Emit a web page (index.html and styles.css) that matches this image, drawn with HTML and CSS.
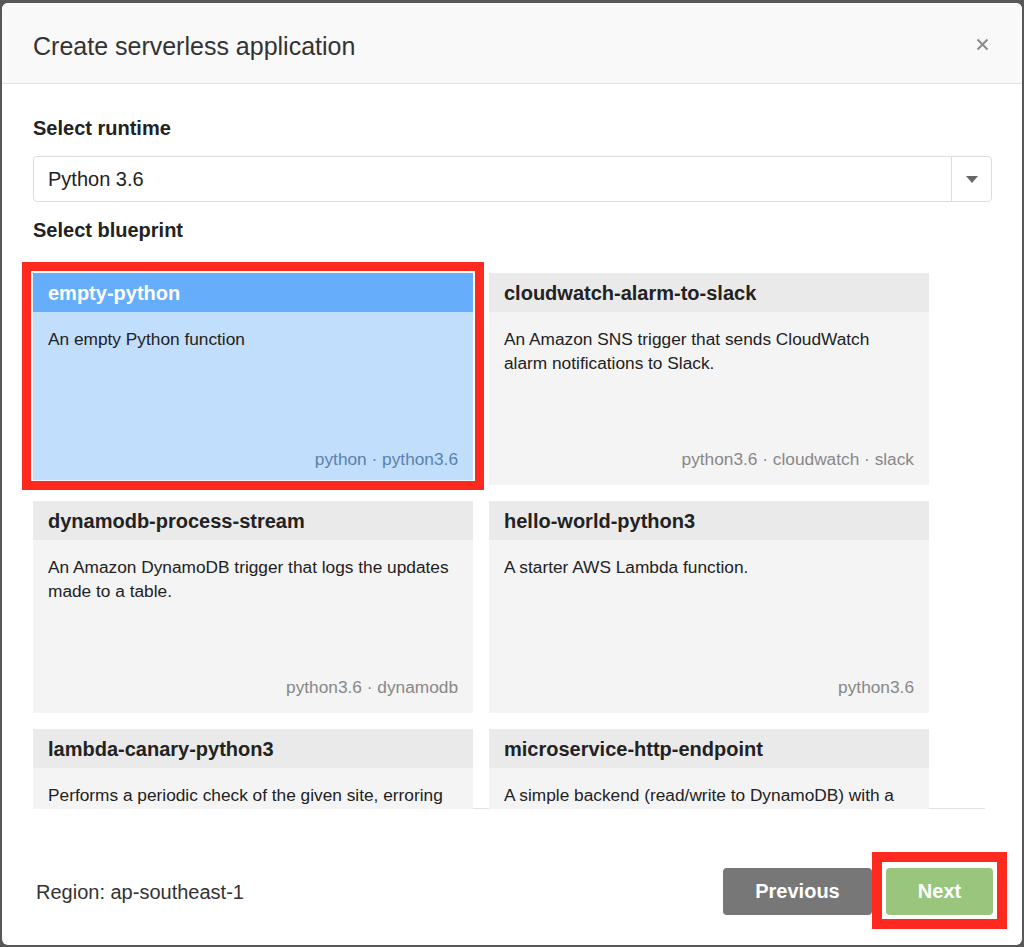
FILE: index.html
```html
<!DOCTYPE html>
<html lang="en">
<head>
<meta charset="utf-8">
<title>Create serverless application</title>
<link rel="stylesheet" href="styles.css">
</head>
<body>
<div class="modal">
  <div class="modal-header">
    <h1 class="modal-title">Create serverless application</h1>
    <button class="close" aria-label="Close">
      <svg width="13" height="13" viewBox="0 0 13 13"><path d="M1.5 1.5 L11.5 11.5 M11.5 1.5 L1.5 11.5" stroke="#8a8a8a" stroke-width="2" fill="none"/></svg>
    </button>
  </div>
  <div class="modal-body">
    <div class="label first">Select runtime</div>
    <div class="select">
      <span class="select-value">Python 3.6</span>
      <span class="select-arrow"><span class="tri"></span></span>
    </div>
    <div class="label">Select blueprint</div>
    <div class="blueprints">
      <div class="grid">
        <div class="card selected">
          <div class="card-title">empty-python</div>
          <div class="card-body">
            <div class="desc">An empty Python function</div>
            <div class="tags">python · python3.6</div>
          </div>
          <div class="annot"></div>
        </div>
        <div class="card">
          <div class="card-title">cloudwatch-alarm-to-slack</div>
          <div class="card-body">
            <div class="desc">An Amazon SNS trigger that sends CloudWatch alarm notifications to Slack.</div>
            <div class="tags">python3.6 · cloudwatch · slack</div>
          </div>
        </div>
        <div class="card">
          <div class="card-title">dynamodb-process-stream</div>
          <div class="card-body">
            <div class="desc">An Amazon DynamoDB trigger that logs the updates made to a table.</div>
            <div class="tags">python3.6 · dynamodb</div>
          </div>
        </div>
        <div class="card">
          <div class="card-title">hello-world-python3</div>
          <div class="card-body">
            <div class="desc">A starter AWS Lambda function.</div>
            <div class="tags">python3.6</div>
          </div>
        </div>
        <div class="card">
          <div class="card-title">lambda-canary-python3</div>
          <div class="card-body">
            <div class="desc">Performs a periodic check of the given site, erroring out on test failure.</div>
            <div class="tags">python3.6 · events</div>
          </div>
        </div>
        <div class="card">
          <div class="card-title">microservice-http-endpoint</div>
          <div class="card-body">
            <div class="desc">A simple backend (read/write to DynamoDB) with a RESTful API endpoint using Amazon API Gateway.</div>
            <div class="tags">python3.6 · api-gateway</div>
          </div>
        </div>
      </div>
    </div>
  </div>
  <div class="modal-footer">
    <div class="region">Region: ap-southeast-1</div>
    <div class="buttons">
      <button class="btn btn-prev">Previous</button>
      <button class="btn btn-next">Next<span class="annot annot-btn"></span></button>
    </div>
  </div>
</div>
</body>
</html>
```
FILE: styles.css
```css
html, body {
  margin: 0;
  padding: 0;
}
body {
  background: #585858;
  font-family: "Liberation Sans", Arial, sans-serif;
  color: #222;
  height: 947px;
  overflow: hidden;
}
.modal {
  margin: 3px 2px 0 2px;
  width: 1020px;
  height: 942px;
  background: #fff;
  border-radius: 6px;
  display: flex;
  flex-direction: column;
  overflow: hidden;
}
.modal-header {
  height: 80px;
  flex: none;
  background: #f9f9f9;
  border-bottom: 1px solid #e3e3e3;
  display: flex;
  align-items: center;
  justify-content: space-between;
  padding: 0 33px 0 31px;
}
.modal-title {
  margin: 5px 0 0 0;
  font-size: 25px;
  font-weight: normal;
  color: #333;
  line-height: 30px;
}
.close {
  border: 0;
  background: none;
  padding: 0;
  width: 13px;
  height: 13px;
  display: flex;
  margin-top: 3px;
}
.modal-body {
  padding: 0 30px 0 31px;
  flex: none;
}
.label {
  font-size: 20px;
  font-weight: bold;
  color: #222;
  line-height: 24px;
  margin-top: 16px;
}
.label.first {
  margin-top: 32px;
}
.select {
  margin-top: 16px;
  height: 44px;
  border: 1px solid #dcdcdc;
  border-radius: 4px;
  display: flex;
  align-items: stretch;
}
.select-value {
  flex: 1;
  padding-left: 14px;
  font-size: 20px;
  line-height: 44px;
  color: #222;
}
.select-arrow {
  width: 39px;
  border-left: 1px solid #dcdcdc;
  display: flex;
  align-items: center;
  justify-content: center;
}
.tri {
  width: 0;
  height: 0;
  border-left: 6px solid transparent;
  border-right: 6px solid transparent;
  border-top: 7px solid #666;
  margin-top: 1px;
}
.blueprints {
  margin-top: 0;
  margin-right: 7px;
  height: 535px;
  padding-top: 31px;
  border-bottom: 1px solid #e2e2e2;
  clip-path: inset(-30px -30px 0 -30px);
}
.grid {
  display: grid;
  grid-template-columns: 440px 440px;
  grid-auto-rows: 212px;
  column-gap: 16px;
  row-gap: 16px;
}
.card {
  position: relative;
  display: flex;
  flex-direction: column;
  background: #f4f4f4;
}
.card-title {
  height: 39px;
  flex: none;
  background: #ebeaea;
  padding: 0 15px;
  font-size: 20px;
  font-weight: bold;
  line-height: 40px;
  color: #222;
}
.card-body {
  flex: 1;
  display: flex;
  flex-direction: column;
  padding: 15px 15px 14px 15px;
}
.desc {
  font-size: 17.3px;
  line-height: 24px;
  color: #222;
}
.tags {
  margin-top: auto;
  text-align: right;
  font-size: 17.3px;
  line-height: 24px;
  color: #888;
}
.card.selected {
  background: #c1defc;
}
.card.selected .card-title {
  background: #66adfb;
  color: #fff;
}
.card.selected .tags {
  color: #5b82ac;
}
.annot {
  position: absolute;
  left: -11px;
  top: -11px;
  right: -11px;
  bottom: -5px;
  border: 9px solid #ff2a1f;
  box-shadow: inset 0 0 0 1px rgba(255, 255, 255, 0.7);
  pointer-events: none;
}
.modal-footer {
  flex: none;
  display: flex;
  align-items: center;
  justify-content: space-between;
  padding: 59px 29px 0 34px;
}
.region {
  font-size: 20px;
  color: #333;
  line-height: 24px;
}
.buttons {
  display: flex;
  gap: 14px;
}
.btn {
  position: relative;
  height: 47px;
  border: 0;
  border-radius: 4px;
  color: #fff;
  font-family: "Liberation Sans", Arial, sans-serif;
  font-size: 20px;
  font-weight: bold;
  padding: 0;
}
.btn-prev {
  width: 149px;
  background: #777;
}
.btn-next {
  width: 107px;
  background: #99c67c;
}
.annot-btn {
  left: -14px;
  top: -16px;
  right: -14px;
  bottom: -14px;
  border-width: 10px;
  box-shadow: none;
}
```
